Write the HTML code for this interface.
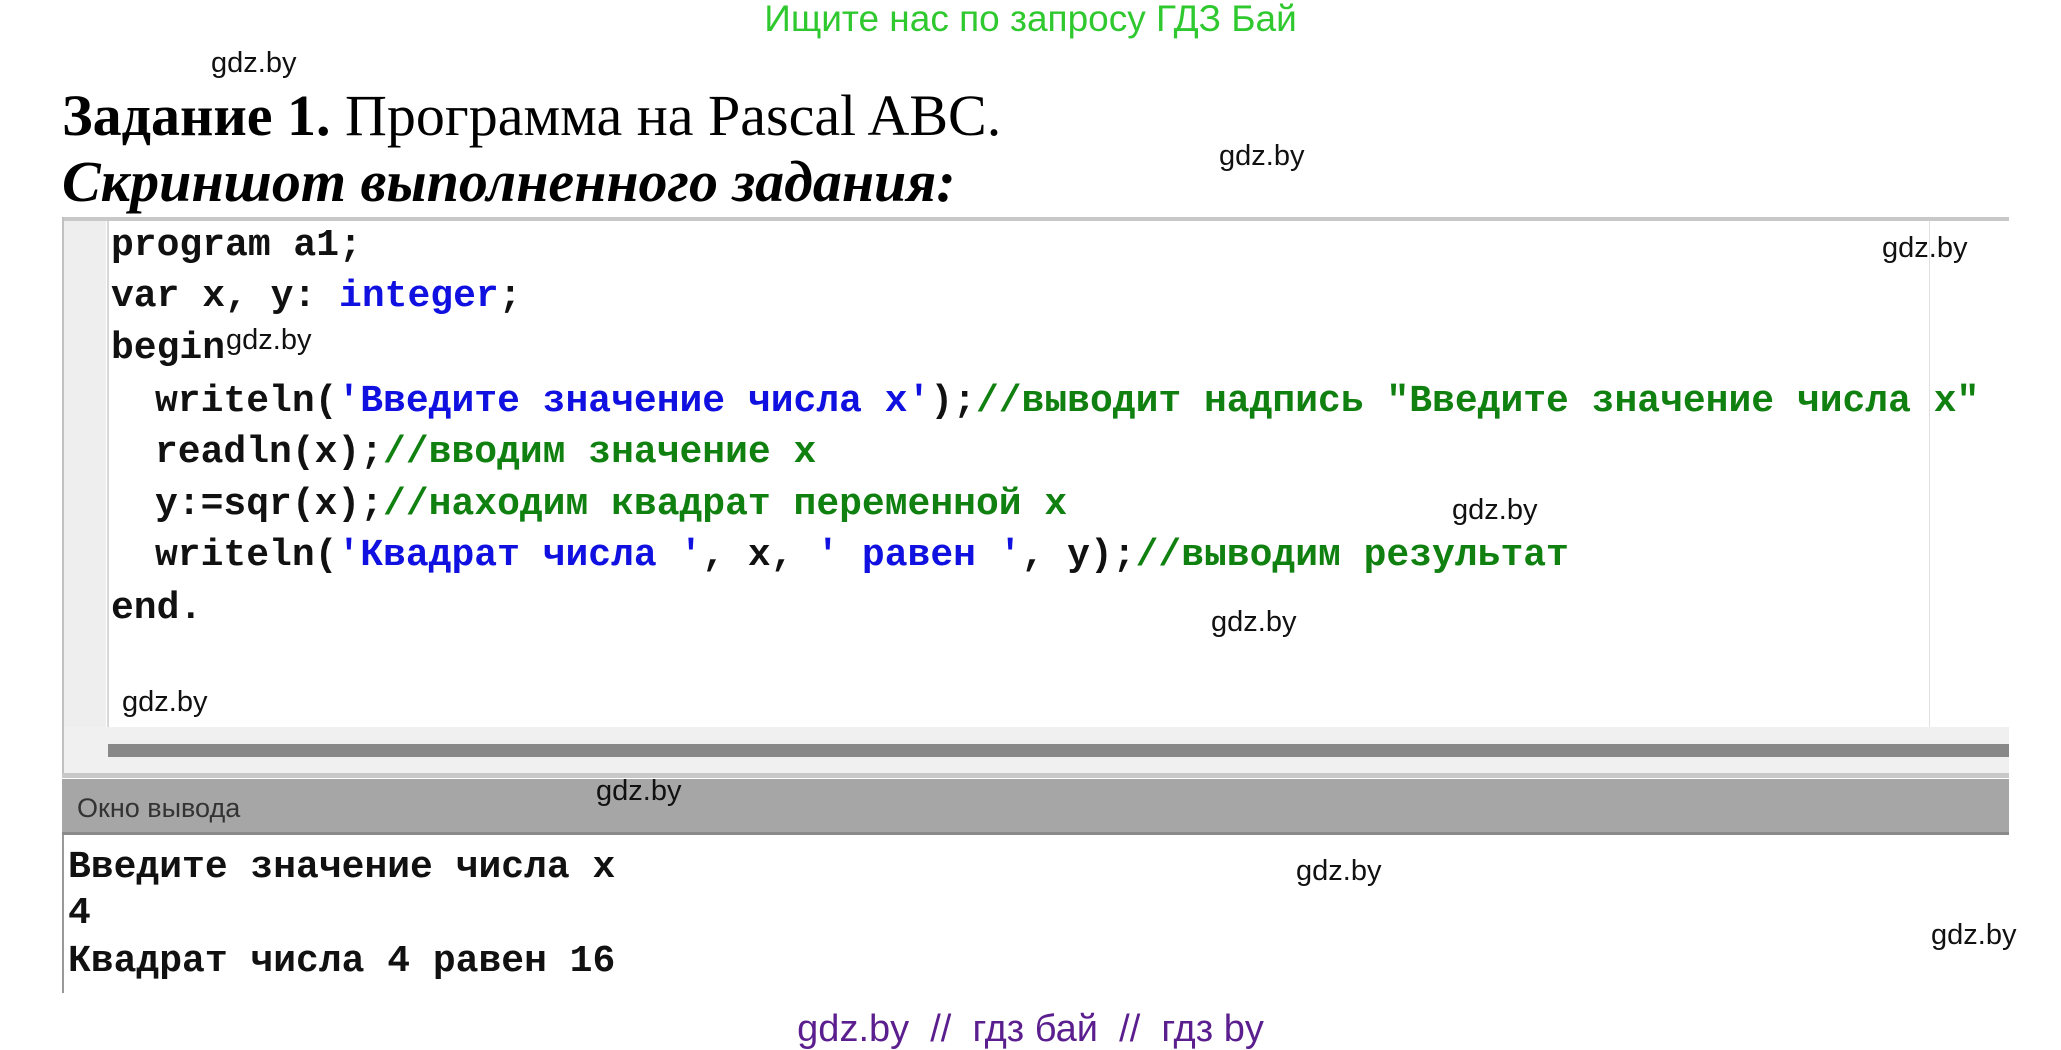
<!DOCTYPE html>
<html><head><meta charset="utf-8"><style>
body{margin:0;width:2061px;height:1048px;background:#fff;position:relative;overflow:hidden;font-family:"Liberation Sans",sans-serif}
.a{position:absolute;white-space:pre}
.w{font-size:29px;color:#111;line-height:34px}
.code{font-family:"Liberation Mono",monospace;font-size:38px;line-height:44px;font-weight:bold;color:#111}
.b{color:#1010e0}.g{color:#108010}
.t{font-family:"Liberation Serif",serif;font-size:58px;line-height:64px;color:#000}
</style></head><body>
<div class="a" style="left:0;width:2061px;text-align:center;top:-1px;font-size:37px;line-height:40px;color:#2fc92f;white-space:normal">Ищите нас по запросу ГДЗ Бай</div>
<div class="a w" style="left:211px;top:46px">gdz.by</div>
<div class="a t" style="left:62px;top:84px"><b>Задание 1.</b> Программа на Pascal ABC.</div>
<div class="a t" style="left:62px;top:150px"><b><i>Скриншот выполненного задания:</i></b></div>
<div class="a w" style="left:1219px;top:139px">gdz.by</div>

<!-- editor -->
<div class="a" style="left:62px;top:217px;width:1947px;height:4px;background:#c8c8c8"></div>
<div class="a" style="left:62px;top:221px;width:44px;height:506px;background:#eeeeee"></div>
<div class="a" style="left:62px;top:217px;width:2px;height:556px;background:#c0c0c0"></div>
<div class="a" style="left:107px;top:221px;width:2px;height:506px;background:#d8d8d8"></div>
<div class="a" style="left:1929px;top:221px;width:1px;height:506px;background:#e0e0e0"></div>
<div class="a" style="left:64px;top:727px;width:1945px;height:48px;background:#f0f0f0"></div>
<div class="a" style="left:108px;top:744px;width:1901px;height:13px;background:#888"></div>
<div class="a" style="left:62px;top:773px;width:1947px;height:5px;background:#c8c8c8"></div>

<div class="a code" style="left:111px;top:224px">program a1;</div>
<div class="a code" style="left:111px;top:275px">var x, y: <span class="b">integer</span>;</div>
<div class="a code" style="left:111px;top:327px">begin</div>
<div class="a code" style="left:155px;top:380px">writeln(<span class="b">'Введите значение числа x'</span>);<span class="g">//выводит надпись "Введите значение числа x"</span></div>
<div class="a code" style="left:155px;top:431px">readln(x);<span class="g">//вводим значение x</span></div>
<div class="a code" style="left:155px;top:483px">y:=sqr(x);<span class="g">//находим квадрат переменной x</span></div>
<div class="a code" style="left:155px;top:534px">writeln(<span class="b">'Квадрат числа '</span>, x, <span class="b">' равен '</span>, y);<span class="g">//выводим результат</span></div>
<div class="a code" style="left:111px;top:587px">end.</div>

<div class="a w" style="left:1882px;top:231px">gdz.by</div>
<div class="a w" style="left:226px;top:323px">gdz.by</div>
<div class="a w" style="left:1452px;top:493px">gdz.by</div>
<div class="a w" style="left:1211px;top:605px">gdz.by</div>
<div class="a w" style="left:122px;top:685px">gdz.by</div>

<!-- output -->
<div class="a" style="left:62px;top:779px;width:1947px;height:56px;background:#a6a6a6;border-bottom:3px solid #8a8a8a;box-sizing:border-box"></div>
<div class="a" style="left:77px;top:792px;font-size:27px;line-height:32px;color:#333">Окно вывода</div>
<div class="a w" style="left:596px;top:774px">gdz.by</div>
<div class="a" style="left:62px;top:835px;width:2px;height:158px;background:#999"></div>
<div class="a code" style="left:68px;top:846px">Введите значение числа x</div>
<div class="a code" style="left:68px;top:892px">4</div>
<div class="a code" style="left:68px;top:940px">Квадрат числа 4 равен 16</div>
<div class="a w" style="left:1296px;top:854px">gdz.by</div>
<div class="a w" style="left:1931px;top:918px">gdz.by</div>

<div class="a" style="left:0;width:2061px;text-align:center;top:1008px;font-size:38px;line-height:42px;color:#5b1e8e;white-space:pre">gdz.by  //  гдз бай  //  гдз by</div>
</body></html>
